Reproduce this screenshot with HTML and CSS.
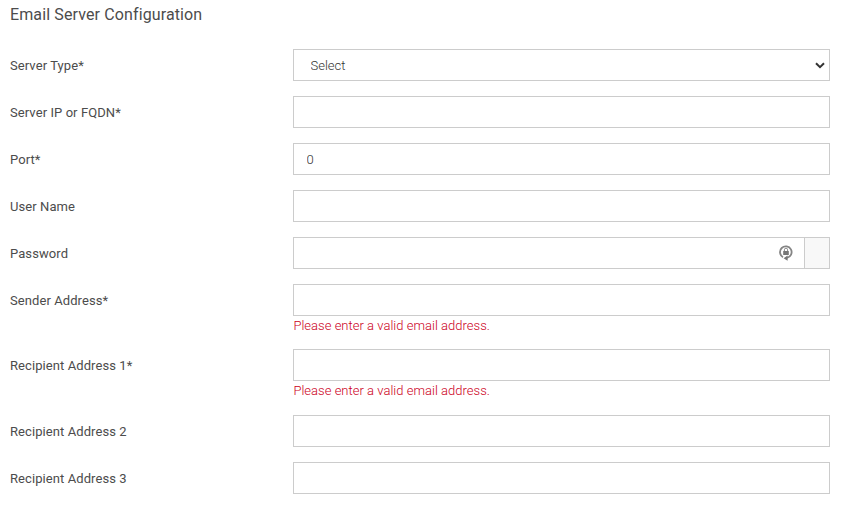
FILE: index.html
```html
<!DOCTYPE html>
<html lang="en">

<head>
    <meta charset="UTF-8">
    <meta name="viewport" content="width=device-width, initial-scale=1.0">
    <title>Email Server Configuration</title>
    <link rel="stylesheet" href="styles.css">
</head>

<body>
    <h1 class="page-title">Email Server Configuration</h1>

    <form class="config-form" novalidate>
        <div class="form-row">
            <label for="serverType">Server Type*</label>
            <div class="field select-wrap">
                <select id="serverType" class="form-control">
                    <option>Select</option>
                </select>
                <svg class="select-arrow" width="10" height="7" viewBox="0 0 10 7">
                    <path d="M1 1.2l4 3.9 4-3.9" fill="none" stroke="#333" stroke-width="2" />
                </svg>
            </div>
        </div>
        <div class="form-row">
            <label for="serverIp">Server IP or FQDN*</label>
            <div class="field">
                <input type="text" id="serverIp" class="form-control">
            </div>
        </div>
        <div class="form-row">
            <label for="port">Port*</label>
            <div class="field">
                <input type="text" id="port" class="form-control" value="0">
            </div>
        </div>
        <div class="form-row">
            <label for="userName">User Name</label>
            <div class="field">
                <input type="text" id="userName" class="form-control">
            </div>
        </div>
        <div class="form-row">
            <label for="password">Password</label>
            <div class="field input-group">
                <input type="password" id="password" class="form-control">
                <svg class="password-icon" width="16" height="18" viewBox="0 0 16 18">
                    <path d="M5 13.2A5.8 5.8 0 1 1 9 13.8" fill="none" stroke="#858585" stroke-width="1.8" />
                    <path d="M9.6 11.6v5.2L5.6 14.2z" fill="#777" />
                    <rect x="5.2" y="7" width="5.6" height="4" fill="#777" />
                    <path d="M6.4 7V5.8a1.6 1.6 0 0 1 3.2 0V7" fill="none" stroke="#888" stroke-width="1" />
                </svg>
                <span class="input-addon"></span>
            </div>
        </div>
        <div class="form-row">
            <label for="sender">Sender Address*</label>
            <div class="field">
                <input type="text" id="sender" class="form-control">
                <div class="error">Please enter a valid email address.</div>
            </div>
        </div>
        <div class="form-row">
            <label for="recipient1">Recipient Address 1*</label>
            <div class="field">
                <input type="text" id="recipient1" class="form-control">
                <div class="error">Please enter a valid email address.</div>
            </div>
        </div>
        <div class="form-row">
            <label for="recipient2">Recipient Address 2</label>
            <div class="field">
                <input type="text" id="recipient2" class="form-control">
            </div>
        </div>
        <div class="form-row">
            <label for="recipient3">Recipient Address 3</label>
            <div class="field">
                <input type="text" id="recipient3" class="form-control">
            </div>
        </div>
    </form>
</body>

</html>
```
FILE: styles.css
```css
* {
    box-sizing: border-box;
}

body {
    margin: 0;
    padding: 5px 13px 0 10px;
    font-family: Roboto, sans-serif;
    font-size: 13px;
    color: #4c4c4c;
    background-color: #fff;
}

.page-title {
    margin: 0 0 24px;
    font-size: 16px;
    font-weight: 400;
    line-height: 20px;
    letter-spacing: 0.12px;
}

.form-row {
    display: flex;
    align-items: flex-start;
    margin-bottom: 15px;
}

.form-row label {
    width: 283px;
    padding-top: 1px;
    line-height: 31px;
    letter-spacing: 0.08px;
}

.field {
    flex: 1;
}

.form-control {
    display: block;
    width: 100%;
    height: 32px;
    padding: 0 13px 0 12.5px;
    border: 1px solid #ccc;
    border-radius: 0;
    background-color: #fff;
    color: #333;
    font-family: inherit;
    font-size: 13px;
    font-weight: 300;
}

.select-wrap {
    position: relative;
}

select.form-control {
    appearance: none;
    padding-left: 16.5px;
}

.select-arrow {
    position: absolute;
    top: 13px;
    right: 5px;
    pointer-events: none;
}

.input-group {
    display: flex;
    position: relative;
}

.input-addon {
    width: 25px;
    flex: none;
    border: 1px solid #ccc;
    border-left: none;
    background-color: #f8f8f8;
}

/* sits over the right end of the password input */
.password-icon {
    position: absolute;
    top: 7px;
    right: 36px;
}

.error {
    height: 18.4px;
    padding: 1px 0 0 0.4px;
    line-height: 18px;
    font-weight: 300;
    letter-spacing: 0.02px;
    color: #cc0022;
}
```
